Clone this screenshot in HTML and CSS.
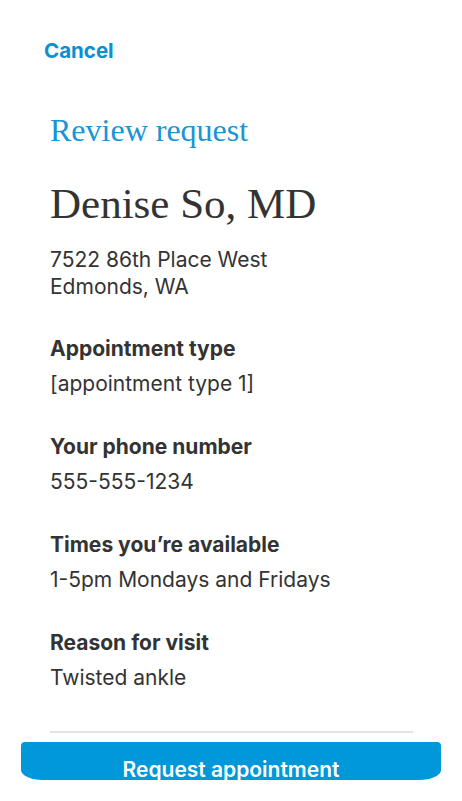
FILE: index.html
```html
<!DOCTYPE html>
<html lang="en">
<head>
    <meta charset="UTF-8">
    <meta name="viewport" content="width=device-width, initial-scale=1.0">
    <title>Review request</title>
    <link rel="stylesheet" href="styles.css">
</head>
<body>

<div class="screen">
    <div class="topbar">
        <a class="cancel" href="#">Cancel</a>
    </div>

    <div class="content">
        <h2 class="title">Review request</h2>
        <h1 class="doctor">Denise So, MD</h1>
        <div class="address">
            7522 86th Place West<br>
            Edmonds, WA
        </div>

        <div class="field">
            <div class="label">Appointment type</div>
            <div class="value">[appointment type 1]</div>
        </div>
        <div class="field">
            <div class="label">Your phone number</div>
            <div class="value">555-555-1234</div>
        </div>
        <div class="field">
            <div class="label">Times you’re available</div>
            <div class="value">1-5pm Mondays and Fridays</div>
        </div>
        <div class="field">
            <div class="label">Reason for visit</div>
            <div class="value">Twisted ankle</div>
        </div>

        <div class="divider"></div>
    </div>

    <div class="footer">
        <button class="request-btn">Request appointment</button>
    </div>
</div>

</body>
</html>
```

FILE: styles.css
```css
body {
    margin: 0;
    padding: 0;
    background-color: #ffffff;
    color: #333333;
    font-family: Inter, "Open Sans", sans-serif;
}
.screen {
    width: 462px;
    height: 801px;
    overflow: hidden;
}
.topbar {
    padding: 39px 0 0 44px;
    height: 29px;
}
.cancel {
    color: #0b8fd3;
    font-size: 20.5px;
    font-weight: 700;
    text-decoration: none;
    line-height: 24px;
}
.content {
    padding: 0 49px 0 50px;
}
.title {
    font-family: "Liberation Serif", serif;
    font-weight: 400;
    font-size: 32px;
    color: #1995d5;
    margin: 44px 0 0 0;
    line-height: 36px;
}
.doctor {
    font-family: "Liberation Serif", serif;
    font-weight: 400;
    font-size: 43px;
    color: #333333;
    margin: 32px 0 0 0;
    line-height: 48px;
}
.address {
    font-size: 21px;
    line-height: 27px;
    margin-top: 18px;
}
.field {
    margin-top: 36px;
}
.field + .field {
    margin-top: 37px;
}
.label {
    font-size: 21px;
    font-weight: 700;
    line-height: 26px;
}
.value {
    font-size: 21px;
    line-height: 26px;
    margin-top: 9px;
}
.divider {
    height: 2px;
    background-color: #e3e3e3;
    margin-top: 40px;
}
.footer {
    padding: 9px 21px 0 21px;
}
.request-btn {
    display: block;
    width: 100%;
    height: 38px;
    border: none;
    background-color: #0098d8;
    color: #ffffff;
    font-family: Inter, "Open Sans", sans-serif;
    font-size: 21px;
    font-weight: 600;
    padding: 16px 0 0 0;
    line-height: 24px;
    overflow: hidden;
    border-radius: 4px 4px 22px 22px / 4px 4px 10px 10px;
}
```
